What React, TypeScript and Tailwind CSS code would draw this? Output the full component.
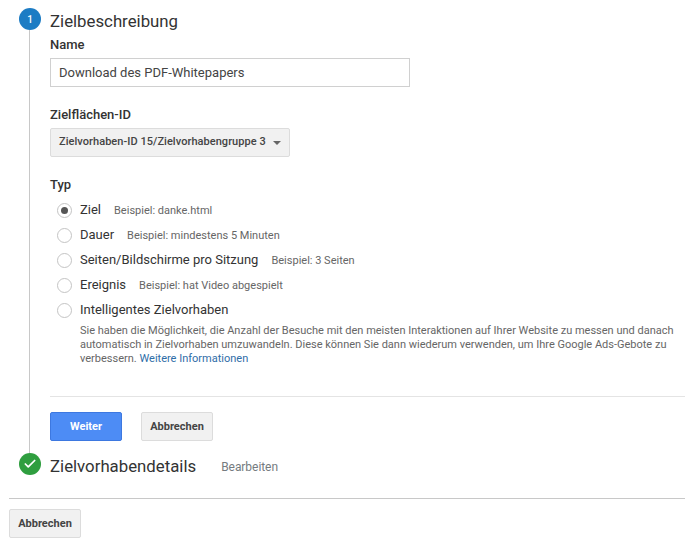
import { Check } from "lucide-react";

const types = [
  { label: "Ziel", hint: "Beispiel: danke.html", checked: true },
  { label: "Dauer", hint: "Beispiel: mindestens 5 Minuten" },
  { label: "Seiten/Bildschirme pro Sitzung", hint: "Beispiel: 3 Seiten" },
  { label: "Ereignis", hint: "Beispiel: hat Video abgespielt" },
];

function Radio({ checked }: { checked?: boolean }) {
  return (
    <span className="flex h-[15px] w-[15px] shrink-0 items-center justify-center rounded-full border border-[#c4c4c4] bg-white">
      {checked && <span className="h-[7px] w-[7px] rounded-full bg-[#555]" />}
    </span>
  );
}

function GreyButton() {
  return (
    <button
      type="button"
      className="h-[29px] w-[72px] rounded-[2px] border border-[#dcdcdc] bg-[#f1f1f1] pt-[1px] text-[11px] font-bold text-[#444]"
    >
      Abbrechen
    </button>
  );
}

export default function App() {
  return (
    <div className="h-[546px] w-[685px] overflow-hidden bg-white font-['Roboto',sans-serif] text-[#333]">
      <div className="flex h-[490px] pl-[19px] pt-[8px]">
        <div className="flex w-[22px] shrink-0 flex-col">
          <div className="flex h-[22px] w-[22px] shrink-0 items-center justify-center rounded-full bg-[#1c7cc4] text-[10px] font-medium text-white">
            1
          </div>
          <div className="ml-[10px] w-px flex-1 bg-[#c8c8c8]" />
          <div className="flex h-[22px] w-[22px] shrink-0 items-center justify-center rounded-full bg-[#2f9e3f] text-white">
            <Check size={14} strokeWidth={3} />
          </div>
          <div className="h-[15px] shrink-0" />
        </div>

        <div className="ml-[9px] flex-1">
          <h2 className="h-[26px] text-[16.8px] leading-[26px] text-[#333]">Zielbeschreibung</h2>
          <label className="mt-[2px] block text-[13px] font-medium leading-[17px] text-[#333]">Name</label>
          <div className="mt-[5px] flex h-[29px] w-[360px] items-center border border-[#d0d0d0] px-[8px] text-[13px] text-[#444]">
            Download des PDF-Whitepapers
          </div>

          <label className="mt-[19px] block text-[13px] font-medium leading-[17px] text-[#333]">Zielflächen-ID</label>
          <div className="mt-[5px] flex h-[29px] w-[240px] items-center rounded-[2px] border border-[#dcdcdc] bg-[#f1f1f1] pl-[8px] text-[11px] font-medium tracking-[0.05px] text-[#444]">
            Zielvorhaben-ID 15/Zielvorhabengruppe 3
            <span className="ml-[7px] h-0 w-0 border-x-[4px] border-t-[4px] border-x-transparent border-t-[#666]" />
          </div>

          <label className="mt-[19px] block text-[13px] font-medium leading-[17px] text-[#333]">Typ</label>

          <div className="mt-[5px] pl-[7px]">
            {types.map((type) => (
              <div key={type.label} className="flex h-[25px] items-center">
                <Radio checked={type.checked} />
                <div className="ml-[8px] flex items-baseline gap-[13px] pb-[2px]">
                  <span className="text-[13px] text-[#333]">{type.label}</span>
                  <span className="text-[11px] text-[#666]">{type.hint}</span>
                </div>
              </div>
            ))}
            <div className="flex h-[25px] items-center">
              <Radio />
              <span className="ml-[8px] pb-[2px] text-[13px] text-[#333]">Intelligentes Zielvorhaben</span>
            </div>
            <p className="ml-[23px] mt-[1px] text-[11px] leading-[14px] text-[#666]">
              Sie haben die Möglichkeit, die Anzahl der Besuche mit den meisten Interaktionen auf Ihrer Website zu messen und danach
              <br />
              automatisch in Zielvorhaben umzuwandeln. Diese können Sie dann wiederum verwenden, um Ihre Google Ads-Gebote zu
              <br />
              verbessern. <span className="text-[#2f6ea8]">Weitere Informationen</span>
            </p>
          </div>

          <div className="mt-[30px] border-t border-[#e4e4e4]" />

          <div className="mt-[15px] flex gap-[19px]">
            <button
              type="button"
              className="h-[29px] w-[72px] rounded-[2px] border border-[#3d78e0] bg-[#4d8cf5] pt-[1px] text-[11px] font-bold text-white"
            >
              Weiter
            </button>
            <GreyButton />
          </div>

          <div className="mt-[12px] flex items-center">
            <span className="text-[16.8px] leading-[27px] text-[#333]">Zielvorhabendetails</span>
            <span className="ml-[25px] text-[12px] tracking-[-0.05px] text-[#757b80]">Bearbeiten</span>
          </div>
        </div>
      </div>

      <div className="ml-[9px] mt-[8px] border-t border-[#c8c8c8]" />
      <div className="ml-[9px] mt-[10px]">
        <GreyButton />
      </div>
    </div>
  );
}
